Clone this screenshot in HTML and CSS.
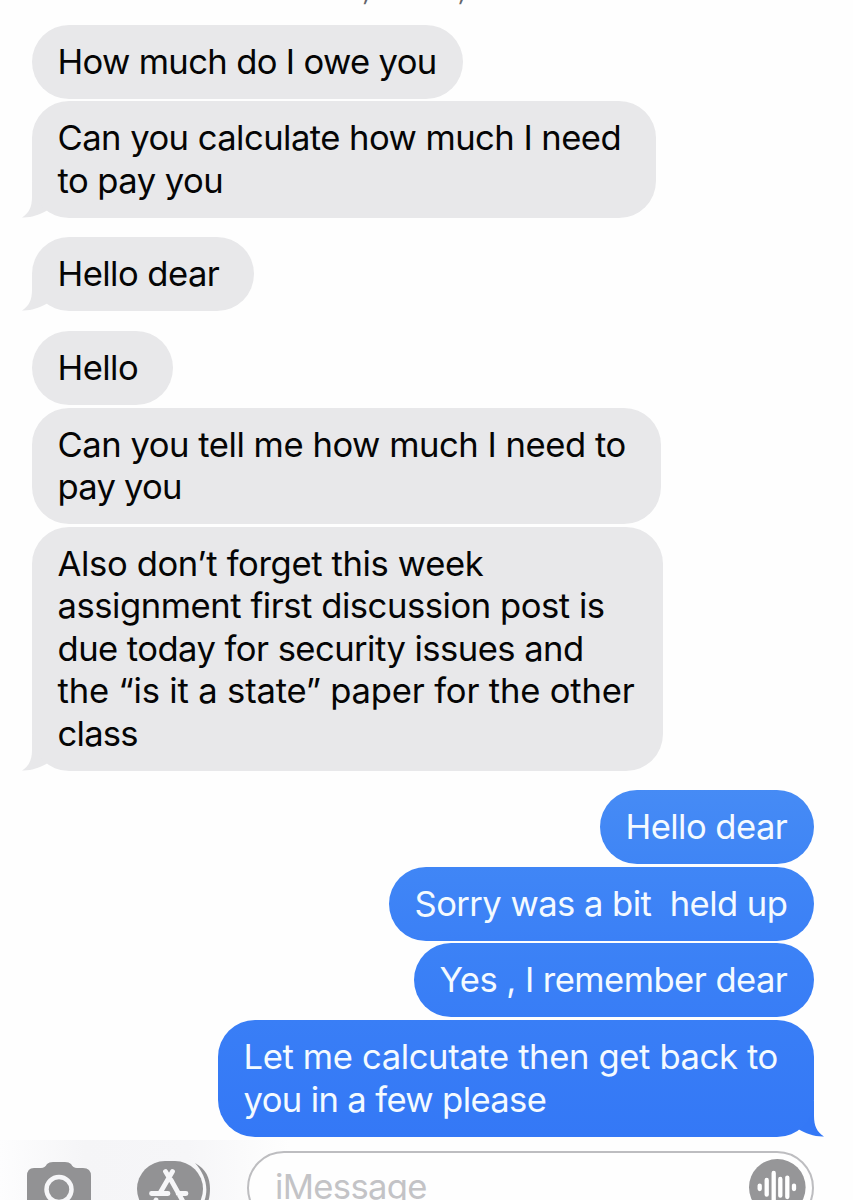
FILE: index.html
```
<!DOCTYPE html>
<html lang="en">
<head>
<meta charset="utf-8">
<title>Messages</title>
<link rel="stylesheet" href="styles.css">
</head>
<body>
<div class="screen">
  <div class="stamp"><span>,</span><span>,</span></div>
  <main class="thread">
    <section class="group received">
      <div class="bubble b1"><span>How much do I owe you</span></div>
      <div class="bubble b2"><span>Can you calculate how much I need</span><span>to pay you</span>
        <svg class="tail" viewBox="0 0 34 36"><path d="M11 0V15C11 25 8 31 1 35.500C10 36 20 32 26 28.500L34 20V0Z"/></svg></div>
    </section>
    <section class="group received">
      <div class="bubble b3"><span>Hello dear</span>
        <svg class="tail" viewBox="0 0 34 36"><path d="M11 0V15C11 25 8 31 1 35.500C10 36 20 32 26 28.500L34 20V0Z"/></svg></div>
    </section>
    <section class="group received">
      <div class="bubble b4"><span>Hello</span></div>
      <div class="bubble b5"><span>Can you tell me how much I need to</span><span class="tightest">pay you</span></div>
      <div class="bubble b6"><span class="loose">Also don’t forget this week</span><span>assignment first discussion post is</span><span class="tight">due today for security issues and</span><span class="looser">the “is it a state” paper for the other</span><span class="tightest">class</span>
        <svg class="tail" viewBox="0 0 34 36"><path d="M11 0V15C11 25 8 31 1 35.500C10 36 20 32 26 28.500L34 20V0Z"/></svg></div>
    </section>
    <section class="group sent">
      <div class="bubble b7"><span>Hello dear</span></div>
      <div class="bubble b8"><span>Sorry was a bit  held up</span></div>
      <div class="bubble b9"><span>Yes , I remember dear</span></div>
      <div class="bubble b10"><span class="loose">Let me calcutate then get back to</span><span>you in a few please</span>
        <svg class="tail" viewBox="0 0 34 36"><path d="M11 0V15C11 25 8 31 1 35.500C10 36 20 32 26 28.500L34 20V0Z"/></svg></div>
    </section>
  </main>
  <footer class="composer">
    <svg class="camera" viewBox="0 0 66 60"><path d="M8 7H15Q19 7 21 3Q23 1 27 1H39Q43 1 45 3Q47 7 51 7H57Q65 7 65 15V60H1V15Q1 7 8 7Z" fill="#929294"/><circle cx="33" cy="28.500" r="12.500" fill="none" stroke="#f6f6f8" stroke-width="4.500"/></svg>
    <svg class="apps" viewBox="0 0 74 66"><path d="M58 2C69 8 73 17 73 27.500C73 42 68 50 58 54C76 36 70 15 58 2Z" fill="#929294"/><rect width="66" height="56" rx="28" fill="#929294"/><g stroke="#f6f6f8" stroke-width="4.800" stroke-linecap="round" fill="none"><path d="M28.500 10.500L31.500 15.500M35.500 10.500L23 32M34 19L48 44M14.500 32.500H31M41 32.500H49M19 39L17 43"/></g></svg>
    <div class="field"><span class="hint">iMessage</span>
      <svg class="voice" viewBox="0 0 58 58"><circle cx="28.300" cy="28.300" r="28.300" fill="#969698"/><g stroke="#fff" stroke-width="4.300" stroke-linecap="round"><path d="M10.700 26.600V30M17.700 20.900V35.700M24.700 14V42.700M31.300 19.900V36.700M38.300 18.600V38M45 26.600V30"/></g></svg>
    </div>
  </footer>
</div>
</body>
</html>
```
FILE: styles.css
```
* { box-sizing: border-box; }
body { margin: 0; background: #fefefe; font-family: Inter, "Liberation Sans", sans-serif; }
.screen { position: relative; width: 853px; height: 1200px; overflow: hidden; padding: 24.7px 39px 0 32px; }
.stamp { position: absolute; left: 364px; top: -23px; width: 103px; display: flex; justify-content: space-between; font-size: 26px; font-style: italic; line-height: 28px; color: #66666a; }
.thread { display: flex; flex-direction: column; gap: 19.6px; height: 1115.3px; }
.group { display: flex; flex-direction: column; gap: 2.6px; align-items: flex-start; }
.sent { align-items: flex-end; }
.bubble { position: relative; flex: none; display: flex; flex-direction: column; align-items: flex-start; padding: 15px 25.5px 16.5px; border-radius: 37px; background: #e8e8ea; color: #050505; font-size: 34.6px; line-height: 42.5px; letter-spacing: -0.54px; white-space: pre; }
.sent .bubble { color: #f4faff; }
.tail { position: absolute; left: -11px; bottom: 0; width: 34px; height: 36px; fill: #e8e8ea; z-index: -1; }
.sent .tail { left: auto; right: -11px; transform: scaleX(-1); fill: #3478f6; }
.b1 { width: 431px; letter-spacing: -0.65px; }
.b2 { width: 624px; }
.b3 { width: 222px; }
.b4 { width: 141px; }
.b5 { width: 629px; letter-spacing: -0.46px; }
.b6 { width: 631px; letter-spacing: -0.45px; }
.b7 { width: 214px; background: linear-gradient(#468bf5, #3f85f5); }
.b8 { width: 425px; background: linear-gradient(#4086f6, #3b80f6); }
.b9 { width: 400px; background: linear-gradient(#3c82f6, #387df6); }
.b10 { width: 596px; background: linear-gradient(#397ef6, #3478f6); letter-spacing: -0.62px; }
.looser { letter-spacing: -0.17px; }
.loose { letter-spacing: -0.36px; }
.tight { letter-spacing: -0.54px; }
.tightest { letter-spacing: -0.75px; }
.composer { display: flex; align-items: flex-start; height: 60px; margin: 0 -39px 0 -32px; padding: 11px 39px 0 26px; background: linear-gradient(90deg, #fdfdfe, #f5f5f7 10%, #f6f6f8 22%, #fefefe 34%); }
.camera { width: 66px; height: 60px; margin-top: 10px; flex: none; }
.apps { width: 74px; height: 66px; margin: 10px 0 0 45px; flex: none; }
.field { flex: none; display: flex; align-items: flex-start; justify-content: space-between; width: 567px; height: 74px; margin-left: 36px; padding: 6px 5px 0 26px; border: 2px solid #bdbdc0; border-radius: 37px; background: #fefefe; }
.hint { margin-top: 6px; font-size: 34.6px; line-height: 42px; letter-spacing: -0.65px; color: #c3c3c6; }
.voice { width: 58px; height: 58px; }
```
